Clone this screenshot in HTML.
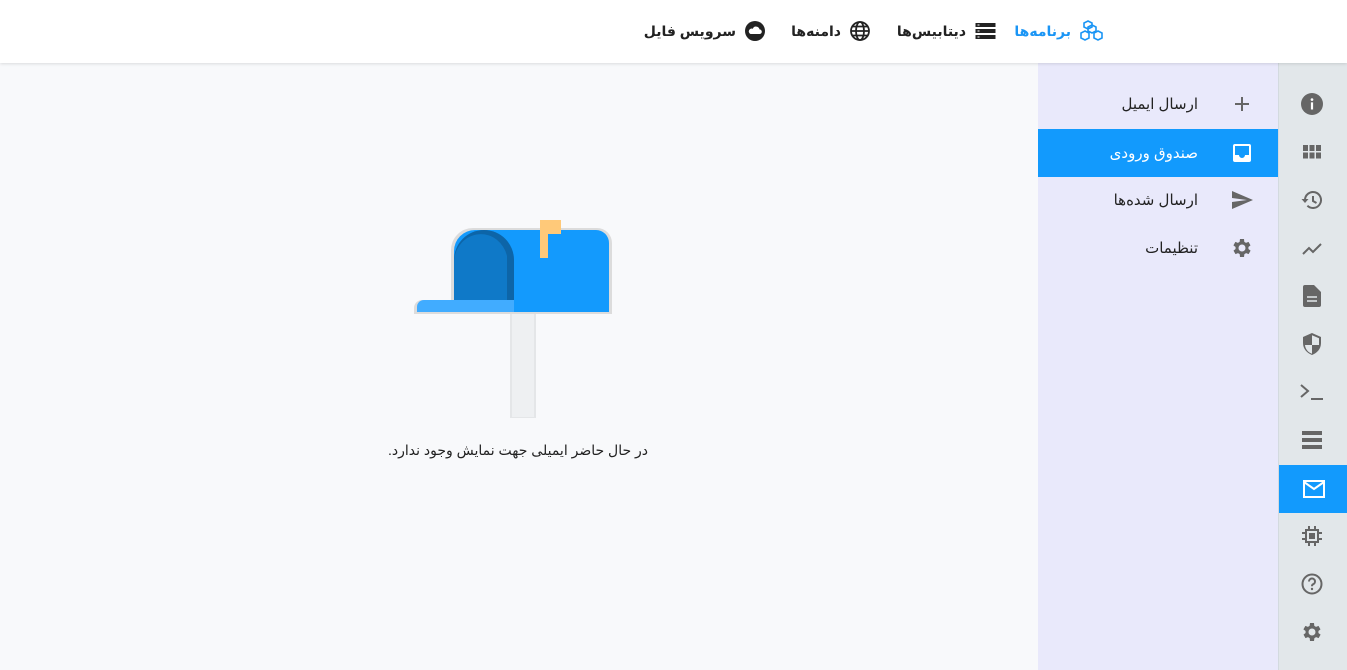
<!DOCTYPE html>
<html dir="rtl"><head><meta charset="utf-8"><style>
*{margin:0;padding:0;box-sizing:border-box}
body{width:1347px;height:670px;overflow:hidden;background:#f8f9fb;font-family:"Liberation Sans","DejaVu Sans",sans-serif;position:relative}
.hdr{position:absolute;left:0;top:0;width:1347px;height:63px;background:#fff;box-shadow:0 1px 3px rgba(0,0,0,.12);z-index:2}
.hi{position:absolute;top:20px;height:22px;display:flex;align-items:center;gap:9px;font-size:14px;font-weight:bold;color:#222;direction:rtl}
.sub{position:absolute;left:1038px;top:63px;width:240px;height:607px;background:#e9e9fb}
.rail{position:absolute;left:1278px;top:63px;width:69px;height:607px;background:#e2e7ea;border-left:1px solid #d3dadf}
.si{position:absolute;left:0;width:240px;height:48px;display:flex;align-items:center;font-size:15px;color:#222}
.si .t{position:absolute;right:80px}
.si svg{position:absolute;right:24px;top:12px}
.ri{position:absolute;left:-1px;width:68px;height:48px;display:flex;align-items:center;justify-content:center}
</style></head><body>
<div class="hdr">
 <div class="hi" style="right:243px;color:#1a95f5"><svg width="24" height="22" viewBox="0 0 24 22"><g fill="none" stroke="#1a95f5" stroke-width="1.6"><path d="M8 1l4 2v4l-4 2-4-2V3z"/><path d="M4 9l4 2v5l-4 2-4-2v-5z" transform="translate(1,2)"/><path d="M16 9l4 2v5l-4 2-4-2v-5z" transform="translate(2,2)"/><path d="M12 5l4 2v4l-4 2-4-2V7z"/></g></svg><span>برنامه‌ها</span></div>
 <div class="hi" style="right:351px"><svg width="21" height="16" viewBox="0 0 20 16"><rect y="0" width="20" height="4" fill="#222"/><rect y="6" width="20" height="4" fill="#222"/><rect y="12" width="20" height="4" fill="#222"/><g fill="#fff"><rect x="2" y="1.5" width="2" height="1"/><rect x="2" y="7.5" width="2" height="1"/><rect x="2" y="13.5" width="2" height="1"/></g></svg><span>دیتابیس‌ها</span></div>
 <div class="hi" style="right:477px"><svg width="20" height="20" viewBox="0 0 20 20" fill="none" stroke="#222" stroke-width="1.8"><circle cx="10" cy="10" r="9"/><ellipse cx="10" cy="10" rx="4" ry="9"/><path d="M1 10h18M2.5 5.5h15M2.5 14.5h15"/></svg><span>دامنه‌ها</span></div>
 <div class="hi" style="right:582px"><svg width="20" height="20" viewBox="0 0 20 20"><circle cx="10" cy="10" r="10" fill="#222"/><path d="M5.5 13h9a2.3 2.3 0 0 0 0-4.6 3.5 3.5 0 0 0-6.7-.6A2.6 2.6 0 0 0 5.5 13z" fill="#fff"/></svg><span>سرویس فایل</span></div>
</div>

<svg style="position:absolute;left:410px;top:215px" width="210" height="206" viewBox="410 215 210 206">
 <rect x="510" y="310" width="26" height="108" fill="#e4e6e8"/><rect x="512" y="310" width="22" height="107" fill="#eef0f2"/>
 <path d="M451 314V250a22 22 0 0 1 22-22h124a15 15 0 0 1 15 15v71z" fill="#dcdcdc"/>
 <path d="M414 314v-6a8 8 0 0 1 8-8h32v14z" fill="#dcdcdc"/>
 <path d="M454 312V251a21 21 0 0 1 21-21h121a13 13 0 0 1 13 13v69z" fill="#139afd"/>
 <path d="M454 300V260a30 30 0 0 1 60 0v40z" fill="#0d65a8"/>
 <path d="M454 300V260a27 29 0 0 1 53-4v44z" fill="#0f79c8"/>
 <path d="M417 312v-5a7 7 0 0 1 7-7h90v12z" fill="#41acff"/>
 <rect x="540" y="220" width="8" height="38" fill="#ffc979"/><rect x="540" y="220" width="21" height="14" fill="#ffc979"/>
</svg>
<div style="position:absolute;left:380px;top:442px;width:276px;text-align:center;font-size:14px;color:#222;direction:rtl">در حال حاضر ایمیلی جهت نمایش وجود ندارد.</div>

<div class="sub">
 <div class="si" style="top:17px"><span class="t">ارسال ایمیل</span><svg width="24" height="24" viewBox="0 0 24 24"><path d="M12 5v14M5 12h14" stroke="#666" stroke-width="2"/></svg></div>
 <div class="si" style="top:66px;background:#129afd;color:#fff"><span class="t">صندوق ورودی</span><svg width="24" height="24" viewBox="0 0 24 24"><rect x="3" y="3" width="18" height="18" rx="2" fill="#fff"/><path d="M5 5h14v9h-4a3 3 0 0 1-6 0H5z" fill="#129afd"/></svg></div>
 <div class="si" style="top:113px"><span class="t">ارسال شده‌ها</span><svg width="24" height="24" viewBox="0 0 24 24"><path d="M2 21l21-9L2 3v7l15 2-15 2z" fill="#666"/></svg></div>
 <div class="si" style="top:161px"><span class="t">تنظیمات</span><svg width="24" height="24" viewBox="0 0 24 24"><path fill="#666" d="M19.4 13a7.5 7.5 0 0 0 0-2l2.1-1.6-2-3.5-2.5 1a7 7 0 0 0-1.7-1L15 3h-4l-.4 2.9a7 7 0 0 0-1.7 1l-2.5-1-2 3.5L6.6 11a7.5 7.5 0 0 0 0 2l-2.1 1.6 2 3.5 2.5-1a7 7 0 0 0 1.7 1L11 21h4l.4-2.9a7 7 0 0 0 1.7-1l2.5 1 2-3.5zM13 15.5a3.5 3.5 0 1 1 0-7 3.5 3.5 0 0 1 0 7z" transform="translate(-1 0)"/></svg></div>
</div>

<div class="rail">
 <div class="ri" style="top:17px"><svg width="22" height="22" viewBox="0 0 20 20"><circle cx="10" cy="10" r="10" fill="#666"/><rect x="9" y="8.5" width="2" height="6.5" fill="#fff"/><circle cx="10" cy="6" r="1.2" fill="#fff"/></svg></div>
 <div class="ri" style="top:65px"><svg width="18" height="14" viewBox="0 0 18 14" fill="#666"><rect width="5" height="6"/><rect x="6.5" width="5" height="6"/><rect x="13" width="5" height="6"/><rect y="7.5" width="5" height="6"/><rect x="6.5" y="7.5" width="5" height="6"/><rect x="13" y="7.5" width="5" height="6"/></svg></div>
 <div class="ri" style="top:113px"><svg width="24" height="24" viewBox="0 0 24 24"><path d="M5 12a8 8 0 1 1 2.4 5.7" fill="none" stroke="#666" stroke-width="2"/><path d="M1.5 11h7L5 15z" fill="#666"/><path d="M13 8v5l3.5 2" fill="none" stroke="#666" stroke-width="2"/></svg></div>
 <div class="ri" style="top:161px"><svg width="22" height="22" viewBox="0 0 22 22"><path d="M2 17l6-6 4 4 8-8" fill="none" stroke="#666" stroke-width="2"/></svg></div>
 <div class="ri" style="top:209px"><svg width="18" height="22" viewBox="0 0 18 22"><path d="M2 0h9l7 7v13a2 2 0 0 1-2 2H2a2 2 0 0 1-2-2V2a2 2 0 0 1 2-2z" fill="#666"/><path d="M4 12h10M4 16h10" stroke="#e2e7ea" stroke-width="1.6"/></svg></div>
 <div class="ri" style="top:257px"><svg width="20" height="22" viewBox="0 0 20 22"><path d="M10 0l9 4v6c0 6-4 10-9 12C5 20 1 16 1 10V4z" fill="#666"/><path d="M10 2.3v9.7H3c.3 4 3 7.4 7 8.8V12h7V5.3z" fill="#e2e7ea"/></svg></div>
 <div class="ri" style="top:305px"><svg width="26" height="20" viewBox="0 0 26 20"><path d="M2 3l7 6-7 6M12 17h12" fill="none" stroke="#666" stroke-width="2"/></svg></div>
 <div class="ri" style="top:353px"><svg width="20" height="18" viewBox="0 0 20 18"><rect y="0" width="20" height="4" fill="#666"/><rect y="7" width="20" height="4" fill="#666"/><rect y="14" width="20" height="4" fill="#666"/></svg></div>
 <div class="ri" style="top:402px;background:#129afd;left:0;width:69px"><svg width="22" height="18" viewBox="0 0 22 18"><rect x="1" y="1" width="20" height="16" fill="none" stroke="#fff" stroke-width="2"/><path d="M1 2l10 7 10-7" fill="none" stroke="#fff" stroke-width="2"/></svg></div>
 <div class="ri" style="top:449px"><svg width="20" height="20" viewBox="0 0 20 20" fill="none" stroke="#666" stroke-width="2"><rect x="4" y="4" width="12" height="12"/><rect x="8" y="8" width="4" height="4" fill="#666"/><path d="M7 0v4M13 0v4M7 16v4M13 16v4M0 7h4M0 13h4M16 7h4M16 13h4"/></svg></div>
 <div class="ri" style="top:497px"><svg width="22" height="22" viewBox="0 0 22 22"><circle cx="11" cy="11" r="9.5" fill="none" stroke="#666" stroke-width="2"/><path d="M8 8.5a3 3 0 1 1 4 2.8c-.8.4-1 1-1 2" fill="none" stroke="#666" stroke-width="2"/><circle cx="11" cy="16" r="1.2" fill="#666"/></svg></div>
 <div class="ri" style="top:545px"><svg width="24" height="24" viewBox="0 0 24 24"><path fill="#666" d="M19.4 13a7.5 7.5 0 0 0 0-2l2.1-1.6-2-3.5-2.5 1a7 7 0 0 0-1.7-1L15 3h-4l-.4 2.9a7 7 0 0 0-1.7 1l-2.5-1-2 3.5L6.6 11a7.5 7.5 0 0 0 0 2l-2.1 1.6 2 3.5 2.5-1a7 7 0 0 0 1.7 1L11 21h4l.4-2.9a7 7 0 0 0 1.7-1l2.5 1 2-3.5zM13 15.5a3.5 3.5 0 1 1 0-7 3.5 3.5 0 0 1 0 7z" transform="translate(-1 0)"/></svg></div>
</div>
</body></html>
